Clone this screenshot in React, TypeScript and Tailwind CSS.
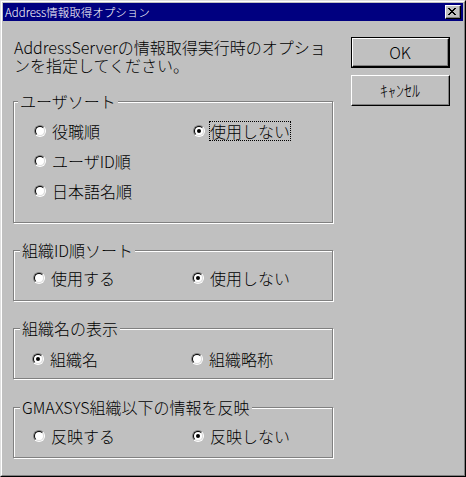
import React from 'react';

const font = 'font-["Noto_Sans_CJK_JP","Liberation_Sans",sans-serif]';

function Radio({ checked = false }: { checked?: boolean }) {
  return (
    <span className="w-[12px] h-[12px] shrink-0 rounded-full border border-t-[#808080] border-l-[#808080] border-r-white border-b-white flex items-center justify-center">
      <span className="w-[10px] h-[10px] rounded-full border border-t-black border-l-black border-r-[#dfdfdf] border-b-[#dfdfdf] bg-white flex items-center justify-center">
        {checked && <span className="w-[4px] h-[4px] rounded-full bg-black" />}
      </span>
    </span>
  );
}

interface OptionProps {
  label: string;
  checked?: boolean;
  focus?: boolean;
}

function Option({ label, checked = false, focus = false }: OptionProps) {
  return (
    <div className="flex items-center h-[20px]">
      <Radio checked={checked} />
      {focus ? (
        <span className="ml-[4px] border border-dotted border-black leading-[18px] whitespace-nowrap">
          {label}
        </span>
      ) : (
        <span className="ml-[6px] leading-[20px] whitespace-nowrap">{label}</span>
      )}
    </div>
  );
}

interface GroupProps {
  title: string;
  className: string;
  legendClass: string;
  children: React.ReactNode;
}

function Group({ title, className, legendClass, children }: GroupProps) {
  return (
    <div
      className={`relative w-[320px] border border-[#808080] shadow-[inset_1px_1px_0_#fff,1px_1px_0_#fff] ${className}`}
    >
      <span
        className={`absolute top-[-11px] px-[2px] bg-[#c0c0c0] leading-[20px] whitespace-nowrap ${legendClass}`}
      >
        {title}
      </span>
      <div className="grid grid-cols-[159px_1fr] gap-y-[10px]">{children}</div>
    </div>
  );
}

function CloseGlyph() {
  return (
    <svg width="8" height="7" viewBox="0 0 8 7" shapeRendering="crispEdges">
      <path
        fill="#000"
        d="M0 0h2v1H0zM6 0h2v1H6zM1 1h2v1H1zM5 1h2v1H5zM2 2h4v1H2zM3 3h2v1H3zM2 4h4v1H2zM1 5h2v1H1zM5 5h2v1H5zM0 6h2v1H0zM6 6h2v1H6z"
      />
    </svg>
  );
}

export default function App() {
  return (
    <div
      className={`w-[466px] h-[477px] bg-[#c0c0c0] border border-t-[#dfdfdf] border-l-[#dfdfdf] border-r-black border-b-black text-black text-[16px] font-light ${font}`}
    >
      <div className="h-full border border-t-white border-l-white border-r-[#808080] border-b-[#808080] p-px flex flex-col">
        {/* Title bar */}
        <div className="h-[18px] bg-[#000080] flex items-center justify-between pl-[2px] pr-[2px]">
          <span className="text-white text-[11.5px] leading-[18px] whitespace-nowrap">
            Address情報取得オプション
          </span>
          <span className="w-[16px] h-[14px] bg-[#c0c0c0] border border-t-white border-l-white border-r-black border-b-black">
            <span className="w-full h-full border-r border-b border-[#808080] flex items-center justify-center pb-[1px] pr-[1px]">
              <CloseGlyph />
            </span>
          </span>
        </div>

        {/* Client area */}
        <div className="flex-1 flex">
          <div className="w-[334px] pl-[10px] pt-[17px]">
            <p className="pl-[1px] leading-[18px] whitespace-nowrap">
              AddressServerの情報取得実行時のオプショ
              <br />
              ンを指定してください。
            </p>

            <Group
              title="ユーザソート"
              className="mt-[27px] h-[122px] pt-[19px] pl-[20px]"
              legendClass="left-[4px]"
            >
              <Option label="役職順" />
              <Option label="使用しない" checked focus />
              <Option label="ユーザID順" />
              <div />
              <Option label="日本語名順" />
              <div />
            </Group>

            <Group
              title="組織ID順ソート"
              className="mt-[27px] h-[51px] pt-[17px] pl-[19px]"
              legendClass="left-[6px]"
            >
              <Option label="使用する" />
              <Option label="使用しない" checked />
            </Group>

            <Group
              title="組織名の表示"
              className="mt-[27px] h-[51px] pt-[20px] pl-[18px]"
              legendClass="left-[6px]"
            >
              <Option label="組織名" checked />
              <Option label="組織略称" />
            </Group>

            <Group
              title="GMAXSYS組織以下の情報を反映"
              className="mt-[28px] h-[51px] pt-[18px] pl-[19px]"
              legendClass="left-[6px]"
            >
              <Option label="反映する" />
              <Option label="反映しない" checked />
            </Group>
          </div>

          {/* Buttons */}
          <div className="pl-[14px] pt-[16px] flex flex-col gap-[7px]">
            <button className="w-[99px] h-[31px] border border-black bg-[#c0c0c0] p-0">
              <span className="block w-full h-full border border-t-white border-l-white border-r-black border-b-black">
                <span className="w-full h-full border-r border-b border-[#808080] flex items-center justify-center leading-[20px]">
                  OK
                </span>
              </span>
            </button>
            <button className="w-[99px] h-[31px] border border-t-white border-l-white border-r-black border-b-black bg-[#c0c0c0] p-0">
              <span className="w-full h-full border-r border-b border-[#808080] flex items-center justify-center leading-[20px]">
                ｷｬﾝｾﾙ
              </span>
            </button>
          </div>
        </div>
      </div>
    </div>
  );
}
